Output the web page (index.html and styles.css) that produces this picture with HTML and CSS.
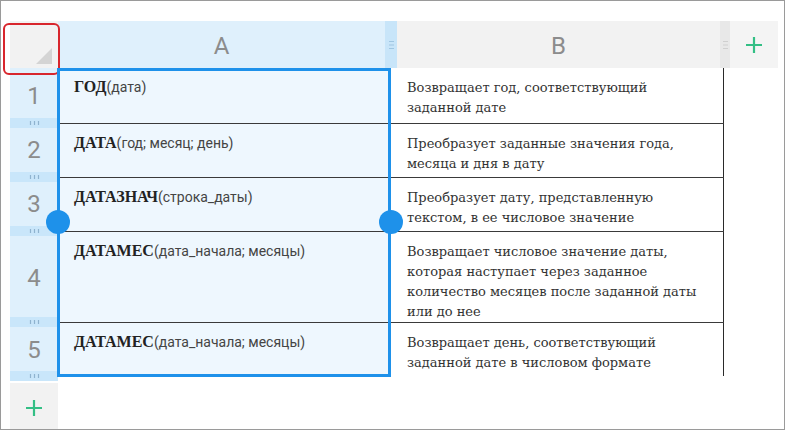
FILE: index.html
```html
<!DOCTYPE html>
<html lang="ru">
<head>
<meta charset="utf-8">
<link rel="stylesheet" href="styles.css">
</head>
<body>
<div class="frame">
  <div class="header">
    <div class="corner">
      <svg class="tri" width="16" height="16" viewBox="0 0 16 16"><polygon points="16,0 16,16 0,16" fill="#d4d4d4"/></svg>
    </div>
    <div class="colhead colhead-a">A</div>
    <div class="resizer resizer-a">
      <svg width="5" height="10" viewBox="0 0 5 10"><path d="M0 1.5h5M0 5h5M0 8.5h5" stroke="#9fc6e2" stroke-width="1.2"/></svg>
    </div>
    <div class="colhead colhead-b">B</div>
    <div class="resizer resizer-b">
      <svg width="5" height="10" viewBox="0 0 5 10"><path d="M0 1.5h5M0 5h5M0 8.5h5" stroke="#cfcfcf" stroke-width="1.2"/></svg>
    </div>
    <div class="addcol">
      <svg width="18" height="18" viewBox="0 0 18 18"><path d="M9 1v16M1 9h16" stroke="#33bf85" stroke-width="2.2"/></svg>
    </div>
    <div class="highlight"></div>
  </div>
  <div class="body">
    <div class="rowheads">
      <div class="rnum r1">1</div>
      <div class="band"><svg width="11" height="4" viewBox="0 0 11 4"><path d="M1.5 0v4M5.5 0v4M9.5 0v4" stroke="#8fb3cf" stroke-width="1.2"/></svg></div>
      <div class="rnum r2">2</div>
      <div class="band"><svg width="11" height="4" viewBox="0 0 11 4"><path d="M1.5 0v4M5.5 0v4M9.5 0v4" stroke="#8fb3cf" stroke-width="1.2"/></svg></div>
      <div class="rnum r3">3</div>
      <div class="band"><svg width="11" height="4" viewBox="0 0 11 4"><path d="M1.5 0v4M5.5 0v4M9.5 0v4" stroke="#8fb3cf" stroke-width="1.2"/></svg></div>
      <div class="rnum r4">4</div>
      <div class="band"><svg width="11" height="4" viewBox="0 0 11 4"><path d="M1.5 0v4M5.5 0v4M9.5 0v4" stroke="#8fb3cf" stroke-width="1.2"/></svg></div>
      <div class="rnum r5">5</div>
      <div class="band"><svg width="11" height="4" viewBox="0 0 11 4"><path d="M1.5 0v4M5.5 0v4M9.5 0v4" stroke="#8fb3cf" stroke-width="1.2"/></svg></div>
      <div class="addrow">
        <svg width="18" height="18" viewBox="0 0 18 18"><path d="M9 1v16M1 9h16" stroke="#33bf85" stroke-width="2.2"/></svg>
      </div>
    </div>
    <div class="table">
      <div class="row h1">
        <div class="cell a"><b>ГОД</b>(дата)</div>
        <div class="cell b">Возвращает год, соответствующий заданной дате</div>
      </div>
      <div class="row h2">
        <div class="cell a"><b>ДАТА</b>(год; месяц; день)</div>
        <div class="cell b">Преобразует заданные значения года, месяца и дня в дату</div>
      </div>
      <div class="row h3">
        <div class="cell a"><b>ДАТАЗНАЧ</b>(строка_даты)</div>
        <div class="cell b">Преобразует дату, представленную текстом, в ее числовое значение</div>
      </div>
      <div class="row h4">
        <div class="cell a"><b>ДАТАМЕС</b>(дата_начала; месяцы)</div>
        <div class="cell b">Возвращает числовое значение даты, которая наступает через заданное количество месяцев после заданной даты или до нее</div>
      </div>
      <div class="row h5 last">
        <div class="cell a"><b>ДАТАМЕС</b>(дата_начала; месяцы)</div>
        <div class="cell b">Возвращает день, соответствующий заданной дате в числовом формате</div>
      </div>
      <div class="selection"></div>
      <div class="knob knob-left"></div>
      <div class="knob knob-right"></div>
    </div>
  </div>
</div>
</body>
</html>
```

FILE: styles.css
```css
* { box-sizing: border-box; }
html, body { margin: 0; padding: 0; background: #fff; }
body { font-family: Roboto, "Noto Sans", sans-serif; }

.frame {
  width: 785px;
  height: 430px;
  border: 1px solid #9a9a9a;
  padding: 20px 0 0 9px;
  overflow: hidden;
}

.header {
  position: relative;
  display: flex;
  height: 47px;
}
.corner {
  width: 48px;
  background: #f2f2f2;
  display: flex;
  align-items: flex-end;
  justify-content: flex-end;
  padding: 0 6px 4px 0;
}
.colhead {
  display: flex;
  align-items: center;
  justify-content: center;
  font-size: 24px;
  color: #8c8c8c;
  padding-top: 3px;
}
.colhead-a { width: 327px; background: #dff0fc; }
.colhead-b { width: 323px; background: #f2f2f2; }
.resizer {
  display: flex;
  align-items: center;
  justify-content: center;
}
.resizer-a { width: 12px; background: #c8e5f9; }
.resizer-b { width: 10px; background: #e8e8e8; }
.addcol {
  width: 48px;
  background: #f4f4f4;
  display: flex;
  align-items: center;
  justify-content: center;
}
.highlight {
  position: absolute;
  left: -7px;
  top: 2px;
  width: 57px;
  height: 52px;
  border: 2px solid #d8262d;
  border-radius: 6px;
}

.body { display: flex; }

.rowheads {
  width: 48px;
  display: flex;
  flex-direction: column;
}
.rnum {
  background: #dff0fc;
  display: flex;
  align-items: center;
  justify-content: center;
  font-size: 24px;
  color: #8c8c8c;
}
.r1 { height: 50px; padding-top: 6px; }
.r2 { height: 44px; }
.r3 { height: 44px; }
.r4 { height: 81px; padding-top: 2px; }
.r5 { height: 44px; padding-top: 2px; }
.band {
  height: 10px;
  background: #c9e6fa;
  display: flex;
  align-items: center;
  justify-content: center;
}
.addrow {
  margin-top: 2px;
  height: 46px;
  background: #f2f2f2;
  display: flex;
  align-items: center;
  justify-content: center;
  padding-top: 3px;
}

.table {
  position: relative;
  width: 666px;
  align-self: flex-start;
}
.row {
  display: flex;
  border-bottom: 1px solid #3a3a3a;
}
.row.last { border-bottom: none; }
.h1 { height: 56px; }
.h2 { height: 54px; }
.h3 { height: 54px; }
.h4 { height: 91px; }
.h5 { height: 53px; }
.cell { line-height: 20px; }
.cell.a {
  width: 332px;
  background: #eef7fe;
  padding: 9px 10px 0 16px;
  font-family: Roboto, sans-serif;
  font-size: 14px;
  color: #444;
}
.cell.a b {
  font-family: "Liberation Serif", serif;
  font-size: 16px;
  font-weight: bold;
  color: #222;
}
.cell.b {
  width: 334px;
  border-right: 1px solid #2a2a2a;
  padding: 10px 12px 0 17px;
  font-family: "DejaVu Serif", serif;
  font-size: 13px;
  color: #333;
}

.selection {
  position: absolute;
  left: -1px;
  top: 0;
  width: 334px;
  height: 309px;
  border: 3px solid #1e91ea;
  pointer-events: none;
}
.knob {
  position: absolute;
  top: 142px;
  width: 24px;
  height: 24px;
  border-radius: 50%;
  background: #1e91ea;
}
.knob-left { left: -12.5px; }
.knob-right { left: 320.5px; }
```
